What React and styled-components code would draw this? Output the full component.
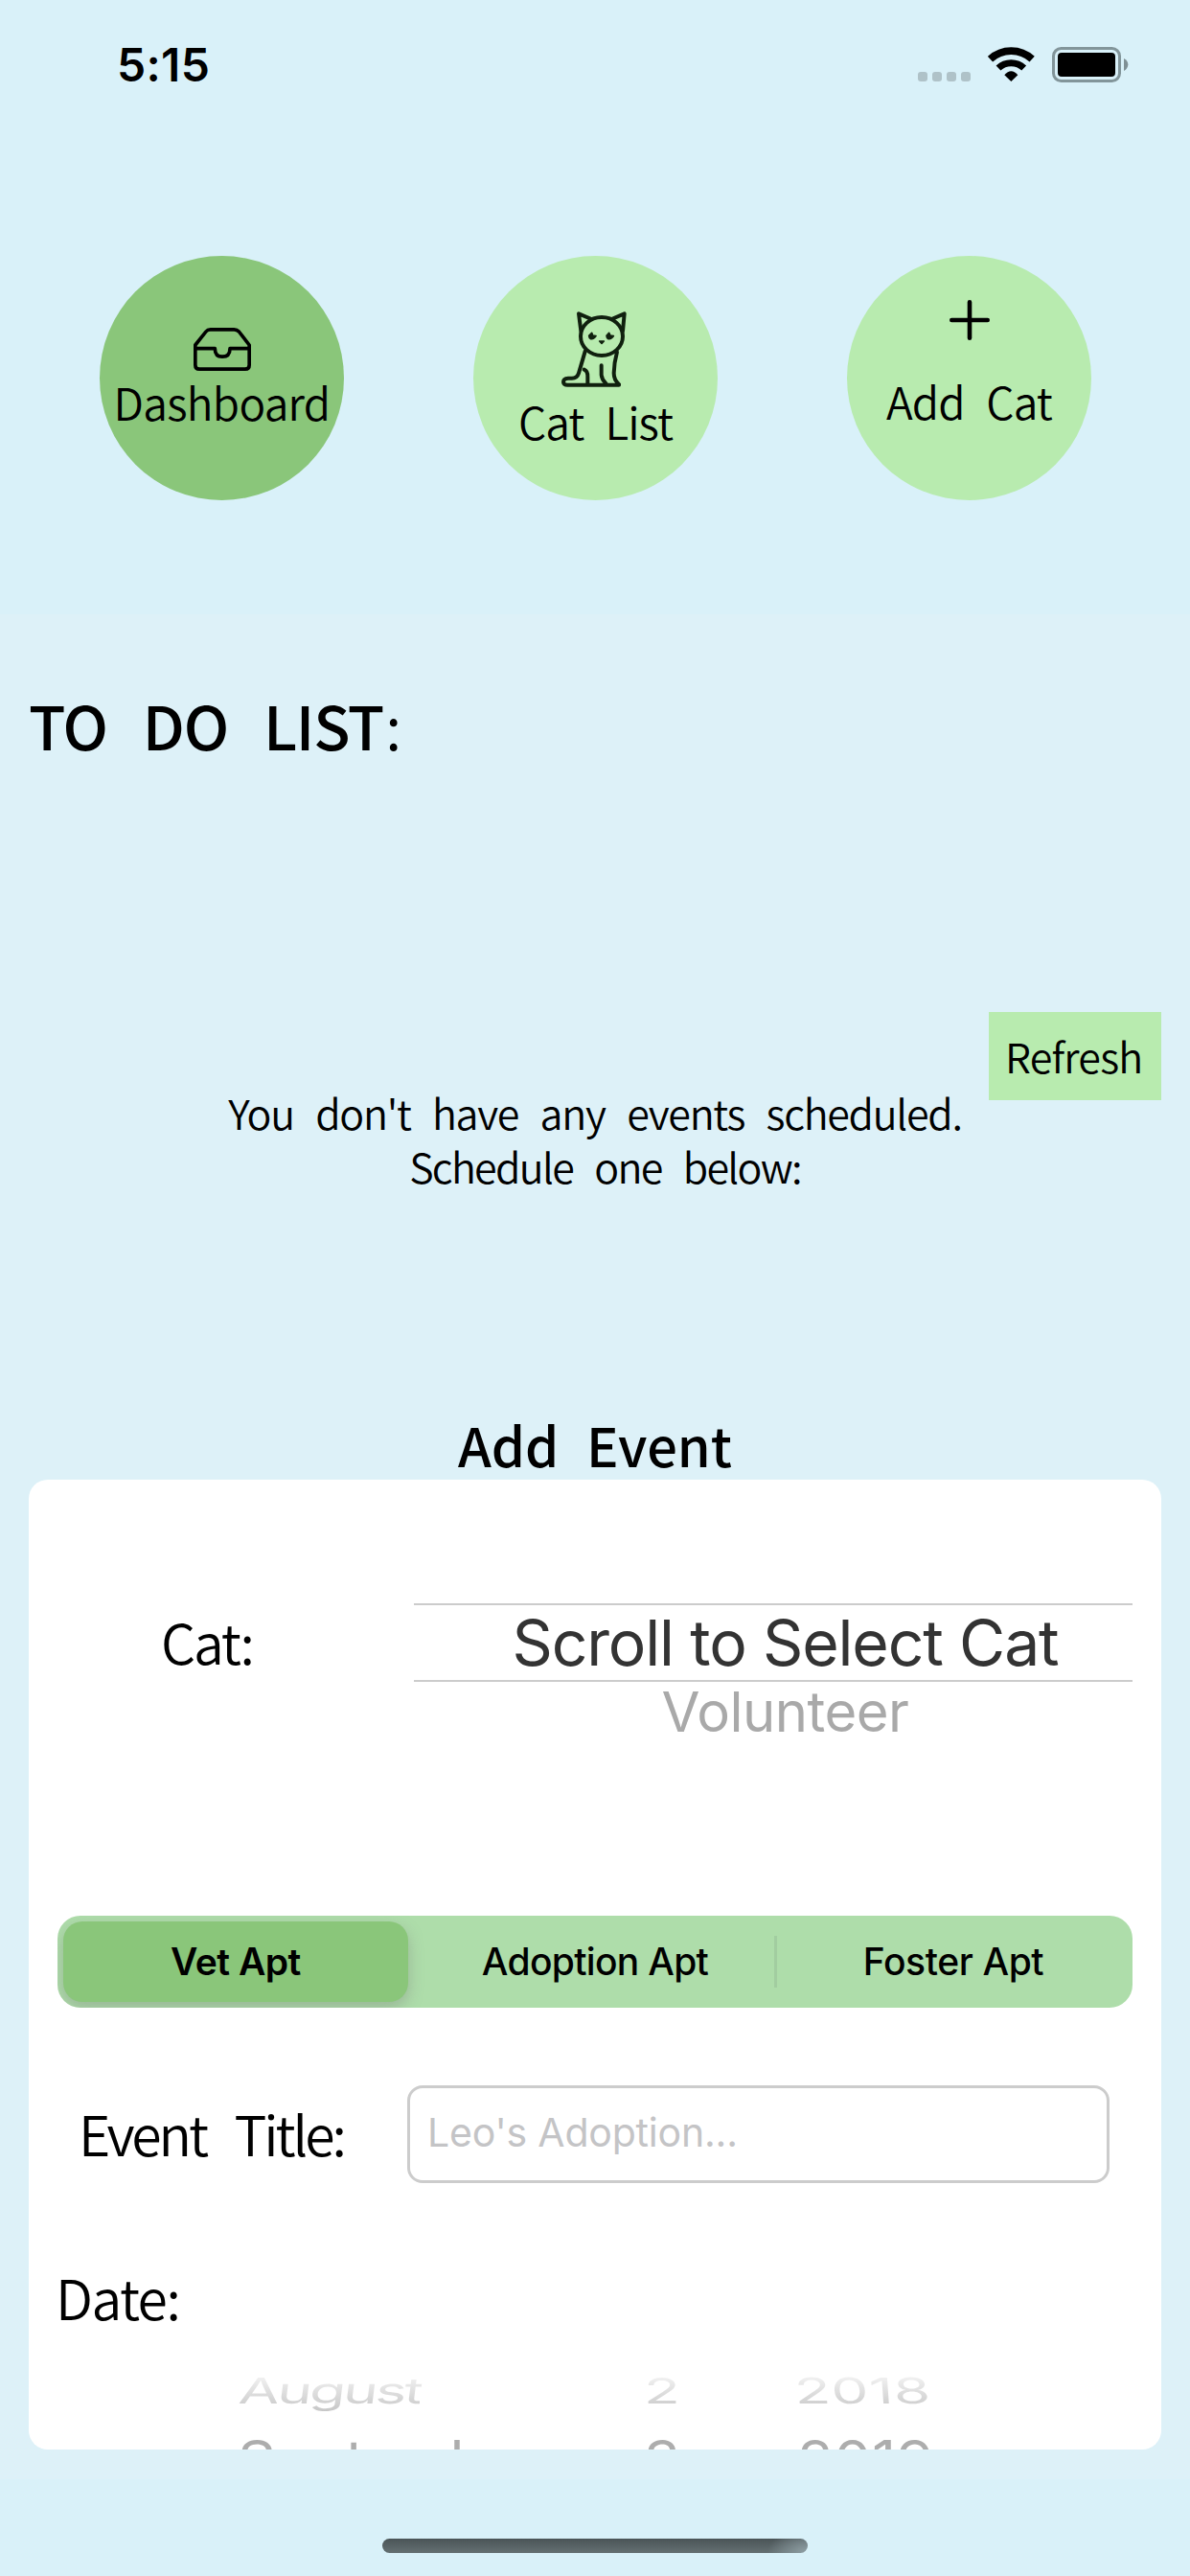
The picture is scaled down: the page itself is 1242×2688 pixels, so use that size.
import React from 'react';
import styled, { createGlobalStyle } from 'styled-components';

const humanist = '"Noto Sans CJK JP", "Noto Sans", sans-serif';
const system = 'Inter, "Liberation Sans", sans-serif';

const GlobalStyle = createGlobalStyle`
  body { margin: 0; background: #d9f1f9; }
  * { box-sizing: border-box; }
`;

const Screen = styled.div`
  width: 1242px;
  height: 2688px;
  overflow: hidden;
  display: flex;
  flex-direction: column;
  background: #d9f1f9;
  color: #000;
`;

/* status bar */
const StatusBar = styled.header`
  height: 132px;
  flex: none;
  display: flex;
  justify-content: space-between;
  padding: 38px 64px 0 122px;
`;
const Clock = styled.div`
  font: 600 48px/60px ${system};
  letter-spacing: 0.3px;
`;
const StatusIcons = styled.div`
  display: flex;
  gap: 18px;
  padding-top: 10px;
  height: 48px;
`;
const Signal = styled.div`
  display: flex;
  align-items: flex-end;
  gap: 5px;
  height: 37px;
`;
const SignalDot = styled.span`
  width: 10px;
  height: 10px;
  border-radius: 3px;
  background: #afc2c8;
`;

/* round navigation buttons */
const Nav = styled.nav`
  height: 509px;
  flex: none;
  display: flex;
  align-items: flex-start;
  gap: 135px;
  padding: 135px 103px 0 104px;
`;
const NavButton = styled.button`
  width: 255px;
  height: 255px;
  flex: none;
  border: 0;
  border-radius: 50%;
  background: ${(p) => (p.$active ? '#8ac67a' : '#b8ebaf')};
  display: flex;
  flex-direction: column;
  align-items: center;
  padding: ${(p) => p.$top}px 0 0;
  gap: ${(p) => p.$gap}px;
  svg { display: block; flex: none; }
`;
const NavLabel = styled.span`
  font: 350 46px/56px ${humanist};
  letter-spacing: ${(p) => p.$tracking}px;
  word-spacing: 13px;
  white-space: nowrap;
  color: #000;
`;

/* dashboard body */
const Dashboard = styled.main`
  height: 1946px;
  flex: none;
  padding: 75px 30px 0;
  background: #ddf1f8;
  display: flex;
  flex-direction: column;
`;
const ListHeading = styled.h1`
  margin: 0;
  height: 340px;
  flex: none;
  font: 500 63px/80px ${humanist};
  letter-spacing: -1.2px;
  word-spacing: 24px;
`;
const Colon = styled.span`
  font-weight: 350;
  margin-left: 2px;
`;
const RefreshButton = styled.button`
  align-self: flex-end;
  width: 180px;
  height: 92px;
  flex: none;
  border: 0;
  padding: 17px 0 19px 17px;
  text-align: left;
  color: #000;
  background: #b8ebaf;
  font: 350 43px/56px ${humanist};
  letter-spacing: -0.8px;
`;
const EmptyMessage = styled.p`
  margin: -16px 0 0;
  height: 343px;
  flex: none;
  text-align: center;
  font: 350 43px/56px ${humanist};
`;
const MessageLine = styled.span`
  display: block;
  padding-left: ${(p) => p.$indent || 0}px;
  letter-spacing: ${(p) => p.$tracking}px;
  word-spacing: 14.2px;
`;
const FormHeading = styled.h2`
  margin: 0;
  height: 69px;
  flex: none;
  text-align: center;
  font: 500 56px/64px ${humanist};
  word-spacing: 16px;
`;

/* event form */
const Card = styled.section`
  height: 1012px;
  flex: none;
  overflow: hidden;
  border-radius: 20px;
  padding: 129px 30px 0;
  background: #fff;
  display: flex;
  flex-direction: column;
`;
const Label = styled.label`
  font: 350 57px/64px ${humanist};
  letter-spacing: ${(p) => p.$tracking}px;
  word-spacing: 20px;
  white-space: nowrap;
`;
const CatRow = styled.div`
  display: flex;
  height: 326px;
  flex: none;
`;
const CatLabelCell = styled.div`
  width: 372px;
  flex: none;
  padding: 7px 0 0 108px;
`;
const Picker = styled.div`
  flex: 1;
  text-align: center;
  font-family: ${system};
`;
const PickerSelected = styled.div`
  height: 82px;
  border: solid #ccc;
  border-width: 2px 0;
  padding-left: 25px;
  font-size: 66px;
  line-height: 79px;
  letter-spacing: -1.15px;
  color: #333;
`;
const PickerNext = styled.div`
  margin-top: 1px;
  padding-left: 25px;
  font-size: 58px;
  line-height: 60px;
  letter-spacing: -0.5px;
  color: #a9a9a9;
`;

const Segments = styled.div`
  height: 96px;
  flex: none;
  display: grid;
  grid-template-columns: repeat(3, 1fr);
  border-radius: 24px;
  overflow: hidden;
  background: #aeddaa;
`;
const Segment = styled.button`
  border: 0;
  padding: 0;
  color: #000;
  display: flex;
  align-items: center;
  justify-content: center;
  font: ${(p) => (p.$active ? 600 : 500)} 39px/48px ${system};
  letter-spacing: ${(p) => p.$tracking}px;
  margin: ${(p) => (p.$active ? '6px 8px 6px 6px' : '0')};
  border-radius: ${(p) => (p.$active ? '20px' : '0')};
  background: ${(p) =>
    p.$active
      ? '#8ac67a'
      : p.$divided
        ? 'linear-gradient(#a2cda0, #a2cda0) left center / 3px 54px no-repeat'
        : 'transparent'};
  box-shadow: ${(p) => (p.$active ? '0 6px 16px rgba(120, 120, 120, 0.4)' : 'none')};
`;

const TitleRow = styled.div`
  display: flex;
  flex: none;
  height: 102px;
  margin-top: 81px;
  padding: 0 24px 0 22px;
`;
const TitleLabelCell = styled.div`
  width: 343px;
  flex: none;
  padding-top: 17px;
`;
const TitleInput = styled.input`
  width: 733px;
  height: 102px;
  border: 3px solid #ccc;
  border-radius: 16px;
  padding: 0 18px 5px;
  background: #fff;
  font: 400 41px/50px ${system};
  letter-spacing: -0.2px;
  &::placeholder { color: #c4c4c6; opacity: 1; }
`;
const DateLabelRow = styled.div`
  flex: none;
  height: 92px;
  margin: 86px 0 0 -2px;
`;

const Wheel = styled.div`
  flex: none;
  font: 400 62px/60px ${system};
  color: #adadad;
`;
const WheelRow = styled.div`
  display: flex;
  height: 79px;
  padding-left: 188px;
`;
const WheelCell = styled.div`
  width: ${(p) => p.$width}px;
  flex: none;
`;
const WheelText = styled.span`
  display: inline-block;
  height: 72px;
  white-space: nowrap;
  letter-spacing: ${(p) => p.$tracking || 0}px;
  transform-origin: 50% 52.6px;
  transform: skewX(${(p) => p.$skew || 0}deg) scaleY(${(p) => (p.$faded ? 0.6 : 0.9)});
  ${(p) =>
    p.$faded &&
    `color: transparent;
     background: linear-gradient(#efefef 8px, #c6c6c6 66px);
     -webkit-background-clip: text;
     background-clip: text;`}
`;

const HomeArea = styled.footer`
  flex: 1;
  display: flex;
  justify-content: center;
  padding-top: 62px;
`;
const HomeIndicator = styled.div`
  width: 444px;
  height: 15px;
  border-radius: 8px;
  background:
    radial-gradient(ellipse 42px 26px at 100% 100%, #8b9ba0 10%, rgba(139, 155, 160, 0) 100%),
    linear-gradient(#4a5457, #647072);
`;

const WifiIcon = () => (
  <svg width="49" height="38" viewBox="273 24 147 114" fill="none" stroke="#000">
    <path d="M280.500 65 A96 96 0 0 1 411.500 65" strokeWidth="23" />
    <path d="M306 93 A58 58 0 0 1 386 93" strokeWidth="21" />
    <path d="M346 135 L325 115 Q346 91 367 115Z" fill="#000" stroke="none" />
  </svg>
);
const BatteryIcon = () => (
  <svg width="80" height="38" viewBox="474 24 240 114">
    <rect x="478.500" y="31.500" width="207" height="102" rx="24" fill="none" stroke="#82959a" strokeWidth="9" />
    <rect x="492" y="45" width="180" height="75" rx="12" />
    <path d="M699 63 Q712 70 712 82 Q712 95 699 102Z" fill="#7f9095" />
  </svg>
);
const TrayIcon = () => (
  <svg width="60" height="45" viewBox="336 276 180 135" fill="none" stroke="#000" strokeWidth="11" strokeLinejoin="round">
    <path d="M341.500 340 V393 Q341.500 405.500 354 405.500 H498 Q510.500 405.500 510.500 393 V330 L478 288 Q472 281.500 463 281.500 H389 Q380 281.500 375 288 L341.500 330 V341 H403 Q403 366.500 426 366.500 Q450 366.500 450 341 H510" />
  </svg>
);
const CatIcon = () => (
  <svg width="72" height="84" viewBox="317 216 216 252" fill="none" stroke="#10200e" strokeWidth="12" strokeLinecap="round" strokeLinejoin="round">
    <ellipse cx="443" cy="303" rx="66" ry="60" />
    <path d="M378 286 L371 232 L411 249 M474 249 L514 232 L509 286" />
    <path d="M391 350 L371 418 Q366 434 350 434 H338 Q323 435 323 446 Q324 455 336 455 H497" />
    <path d="M491 352 Q482 385 481 418 Q481 440 497 453" />
    <path d="M442 394 V424 Q444 440 456 450" />
    <path d="M388 407 Q400 412 399 430 V450" />
    <path d="M403 301 L412 292 L415 300 L425 302 Q418 313 409 311 Q403 308 403 301Z" fill="#10200e" strokeWidth="5" />
    <path d="M458 301 L466 292 L470 300 L480 302 Q473 313 464 311 Q458 308 458 301Z" fill="#10200e" strokeWidth="5" />
    <path d="M436 318 H450 L443 325Z" fill="#10200e" strokeWidth="5" />
  </svg>
);
const PlusIcon = () => (
  <svg width="48" height="48" viewBox="0 0 48 48" stroke="#000" strokeWidth="4.600" strokeLinecap="round">
    <path d="M24 5.300 V42.700 M5.300 24 H42.700" />
  </svg>
);

export default function App() {
  return (
    <Screen>
      <GlobalStyle />
      <StatusBar>
        <Clock>5:15</Clock>
        <StatusIcons>
          <Signal>
            <SignalDot />
            <SignalDot />
            <SignalDot />
            <SignalDot />
          </Signal>
          <WifiIcon />
          <BatteryIcon />
        </StatusIcons>
      </StatusBar>

      <Nav>
        <NavButton $active $top={75} $gap={4}>
          <TrayIcon />
          <NavLabel $tracking={-0.7}>Dashboard</NavLabel>
        </NavButton>
        <NavButton $top={55} $gap={5}>
          <CatIcon />
          <NavLabel $tracking={-1}>Cat List</NavLabel>
        </NavButton>
        <NavButton $top={43} $gap={32}>
          <PlusIcon />
          <NavLabel $tracking={-0.8}>Add Cat</NavLabel>
        </NavButton>
      </Nav>

      <Dashboard>
        <ListHeading>
          TO DO LIST<Colon>:</Colon>
        </ListHeading>
        <RefreshButton>Refresh</RefreshButton>
        <EmptyMessage>
          <MessageLine $tracking={-1.3}>You don't have any events scheduled.</MessageLine>
          <MessageLine $tracking={-1.7} $indent={21}>Schedule one below:</MessageLine>
        </EmptyMessage>

        <FormHeading>Add Event</FormHeading>
        <Card>
          <CatRow>
            <CatLabelCell>
              <Label $tracking={-2.2}>Cat:</Label>
            </CatLabelCell>
            <Picker>
              <PickerSelected>Scroll to Select Cat</PickerSelected>
              <PickerNext>Volunteer</PickerNext>
            </Picker>
          </CatRow>

          <Segments>
            <Segment $active $tracking={-0.5}>Vet Apt</Segment>
            <Segment $tracking={-0.7}>Adoption Apt</Segment>
            <Segment $divided $tracking={-0.4}>Foster Apt</Segment>
          </Segments>

          <TitleRow>
            <TitleLabelCell>
              <Label $tracking={-3.1}>Event Title:</Label>
            </TitleLabelCell>
            <TitleInput placeholder="Leo's Adoption..." />
          </TitleRow>

          <DateLabelRow>
            <Label $tracking={-1.5}>Date:</Label>
          </DateLabelRow>

          <Wheel>
            <WheelRow>
              <WheelCell $width={424}><WheelText $faded $skew={-7} $tracking={-2.9}>August</WheelText></WheelCell>
              <WheelCell $width={158}><WheelText $faded>2</WheelText></WheelCell>
              <WheelCell $width={160}><WheelText $faded $skew={4} $tracking={0.5}>2018</WheelText></WheelCell>
            </WheelRow>
            <WheelRow>
              <WheelCell $width={424}><WheelText $tracking={-0.4}>September</WheelText></WheelCell>
              <WheelCell $width={160}><WheelText>3</WheelText></WheelCell>
              <WheelCell $width={160}><WheelText $tracking={0.5}>2019</WheelText></WheelCell>
            </WheelRow>
          </Wheel>
        </Card>
      </Dashboard>

      <HomeArea>
        <HomeIndicator />
      </HomeArea>
    </Screen>
  );
}
